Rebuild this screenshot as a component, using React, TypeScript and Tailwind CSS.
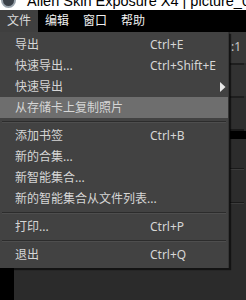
type Item =
  | { kind: "item"; label: string; shortcut?: string; submenu?: boolean; active?: boolean }
  | { kind: "sep" };

const items: Item[] = [
  { kind: "item", label: "导出", shortcut: "Ctrl+E" },
  { kind: "item", label: "快速导出...", shortcut: "Ctrl+Shift+E" },
  { kind: "item", label: "快速导出", submenu: true },
  { kind: "item", label: "从存储卡上复制照片", active: true },
  { kind: "sep" },
  { kind: "item", label: "添加书签", shortcut: "Ctrl+B" },
  { kind: "item", label: "新的合集..." },
  { kind: "item", label: "新智能集合..." },
  { kind: "item", label: "新的智能集合从文件列表..." },
  { kind: "sep" },
  { kind: "item", label: "打印...", shortcut: "Ctrl+P" },
  { kind: "sep" },
  { kind: "item", label: "退出", shortcut: "Ctrl+Q" },
];

const font = { fontFamily: '"Noto Sans", "Noto Sans CJK SC", sans-serif' };

const TitleBar = () => (
  <div className="h-[10px] bg-white overflow-hidden flex items-start">
    <div className="ml-[1px] mt-[-7px] w-[15px] h-[15px] rounded-full bg-[#3a4048] border-2 border-[#9aa4ad] shrink-0" />
    <div
      className="ml-[11px] mt-[-6px] text-[14.5px] leading-[15px] text-black whitespace-nowrap"
      style={{ fontFamily: '"Liberation Sans", sans-serif' }}
    >
      Alien Skin Exposure X4 | picture_0012.jpg
    </div>
  </div>
);

const MenuBar = () => (
  <div className="h-[22px] bg-black flex text-[12px] leading-[22px]" style={font}>
    <div className="px-[7px] bg-[#3f3f3f] text-[#dcdcdc]">文件</div>
    <div className="px-[7px] text-[#f0f0f0]">编辑</div>
    <div className="px-[7px] text-[#f0f0f0]">窗口</div>
    <div className="px-[7px] text-[#f0f0f0]">帮助</div>
  </div>
);

const Dropdown = () => (
  <div
    className="absolute top-[32px] left-0 w-[229px] bg-[#424242] pt-[2px] pb-[3px] shadow-[2px_2px_1px_rgba(0,0,0,0.55)] border-r border-[#353535]"
    style={font}
  >
    {items.map((it, i) =>
      it.kind === "sep" ? (
        <div key={i} className="h-[7px] flex flex-col justify-center px-[2px]">
          <div className="h-px bg-[#2c2c2c]" />
          <div className="h-px bg-[#4e4e4e]" />
        </div>
      ) : (
        <div
          key={i}
          className={`h-[21px] flex items-center text-[12px] text-[#d6d6d6] relative ${
            it.active ? "bg-[#6e6e6e]" : ""
          }`}
        >
          <span className="pl-[15px] w-[150px] whitespace-nowrap">{it.label}</span>
          {it.shortcut && <span className="whitespace-nowrap">{it.shortcut}</span>}
          {it.submenu && (
            <svg className="absolute left-[220px] top-[6px]" width="6" height="10" viewBox="0 0 6 10">
              <polygon points="0,0 5.5,5 0,10" fill="#e8e8e8" />
            </svg>
          )}
        </div>
      )
    )}
  </div>
);

const Background = () => (
  <div className="h-[268px] flex">
    <div className="w-[14px] bg-black" />
    <div className="flex-1 bg-[#2b2b2b]" />
    <div className="w-[16px] bg-[#2c2c2c] flex flex-col">
      <div className="h-[31px] bg-[#383838] text-[12px] leading-[30px] text-[#c8c8c8] pl-[1px]" style={font}>
        :1
      </div>
      <div className="h-[2px] bg-[#1e1e1e] mr-[2px]" />
      <div className="h-[31px] bg-[#323232]" />
      <div className="h-[2px] bg-[#1e1e1e] mr-[2px]" />
      <div className="h-[31px] bg-[#2e2e2e]" />
      <div className="h-[2px] bg-[#1a1a1a] mr-[2px]" />
      <div className="h-[8px] bg-black" />
      <div className="h-[29px]" />
      <div className="h-[2px] bg-[#1a1a1a] border-b border-[#3c3c3c] mr-[2px]" />
      <div className="h-[32px]" />
      <div className="h-[2px] bg-[#1a1a1a] border-b border-[#3c3c3c] mr-[2px]" />
    </div>
  </div>
);

export default function App() {
  return (
    <div className="w-[246px] h-[300px] overflow-hidden relative bg-[#2b2b2b]">
      <TitleBar />
      <MenuBar />
      <Background />
      <Dropdown />
    </div>
  );
}
